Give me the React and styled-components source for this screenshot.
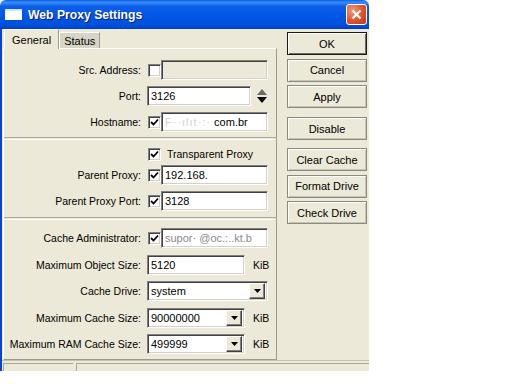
import React from 'react';
import styled, { createGlobalStyle } from 'styled-components';

const GlobalStyle = createGlobalStyle`
  html, body {
    margin: 0;
    padding: 0;
    background: #fff;
  }
  body {
    font-family: 'Liberation Sans', Arial, sans-serif;
    font-size: 11px;
    color: #000;
  }
`;

const Window = styled.div`
  width: 369px;
  height: 371px;
  background: #ece9d8;
  display: flex;
  flex-direction: column;
  overflow: hidden;
`;

const TitleBar = styled.div`
  height: 29px;
  flex: none;
  display: flex;
  align-items: center;
  padding: 0 2px 0 5px;
  background: linear-gradient(
    to bottom,
    #0a5ee8 0%,
    #3b8cf6 8%,
    #0b5fe9 22%,
    #0055e5 60%,
    #0050dc 85%,
    #0040c4 100%
  );
  border-radius: 6px 6px 0 0;
`;

const TitleIcon = styled.div`
  width: 17px;
  height: 11px;
  background: #fff;
  border-top: 2px solid #d8e4fa;
  box-sizing: border-box;
  margin-right: 6px;
`;

const TitleText = styled.div`
  flex: 1;
  color: #fff;
  font-weight: bold;
  font-size: 12.2px;
  text-shadow: 1px 1px #0a1e80;
`;

const CloseButton = styled.div`
  width: 21px;
  height: 21px;
  box-sizing: border-box;
  border: 1px solid #fff;
  border-radius: 3px;
  background: radial-gradient(circle at 30% 30%, #f09a7c, #e0512c 55%, #c43714);
  display: flex;
  align-items: center;
  justify-content: center;
`;

const Frame = styled.div`
  flex: 1;
  display: flex;
  flex-direction: column;
  border-left: 2px solid #0a45d2;
  min-height: 0;
`;

const Body = styled.div`
  flex: 1;
  display: flex;
  padding-left: 1px;
  min-height: 0;
`;

const LeftCol = styled.div`
  width: 274px;
  display: flex;
  flex-direction: column;
`;

const Tabs = styled.div`
  height: 19px;
  display: flex;
  align-items: flex-end;
  padding-left: 1px;
`;

const Tab = styled.div`
  box-sizing: border-box;
  height: ${(p) => (p.$active ? '20px' : '16px')};
  margin-bottom: ${(p) => (p.$active ? '-1px' : '0')};
  padding: 0 ${(p) => (p.$active ? '7px' : '4px')};
  display: flex;
  align-items: center;
  background: ${(p) => (p.$active ? '#ece9d8' : '#d9d5c6')};
  border-top: 1px solid #fff;
  border-left: 1px solid #fff;
  border-right: 1px solid #9d9a8c;
  font-size: 11px;
  position: relative;
  z-index: ${(p) => (p.$active ? 1 : 0)};
`;

const Panel = styled.div`
  flex: 1;
  box-sizing: border-box;
  border-top: 1px solid #fff;
  border-left: 1px solid #fff;
  border-right: 1px solid #9d9a8c;
  border-bottom: 1px solid #9d9a8c;
  display: flex;
  flex-direction: column;
`;

const Section = styled.div`
  display: flex;
  flex-direction: column;
  gap: ${(p) => p.$gap || 6}px;
  padding-top: ${(p) => p.$top || 0}px;
`;

const Separator = styled.div`
  height: 1px;
  border-top: 1px solid #aca899;
  border-bottom: 1px solid #fff;
  margin-top: ${(p) => p.$top}px;
`;

const Row = styled.div`
  display: flex;
  align-items: center;
  height: ${(p) => p.$h || 20}px;
`;

const Label = styled.div`
  width: 137px;
  margin-right: 6px;
  text-align: right;
  font-size: 10.5px;
  white-space: nowrap;
`;

const Check = styled.div`
  width: 13px;
  height: 13px;
  box-sizing: border-box;
  margin-left: 1px;
  background: #fff;
  border-top: 1px solid #808080;
  border-left: 1px solid #808080;
  border-right: 1px solid #fff;
  border-bottom: 1px solid #fff;
  box-shadow: inset 1px 1px #404040, inset -1px -1px #d4d0c8;
  display: flex;
  align-items: center;
  justify-content: center;
  flex: none;
`;

const Field = styled.div`
  width: ${(p) => p.$w}px;
  height: 20px;
  box-sizing: border-box;
  background: ${(p) => (p.$disabled ? '#ece9d8' : '#fff')};
  border-top: 1px solid #808080;
  border-left: 1px solid #808080;
  border-right: 1px solid #fff;
  border-bottom: 1px solid #fff;
  box-shadow: inset 1px 1px #404040, inset -1px -1px #d4d0c8;
  display: flex;
  align-items: center;
  padding: 0 2px 0 3px;
  font-size: 11px;
  white-space: nowrap;
  overflow: hidden;
  flex: none;
`;

const Value = styled.span`
  flex: 1;
  overflow: hidden;
`;

const Blur = styled.span`
  color: ${(p) => p.$c || '#c8c8c8'};
  letter-spacing: ${(p) => p.$ls || 0}px;
`;

const DropButton = styled.div`
  width: 16px;
  height: 16px;
  box-sizing: border-box;
  background: #ece9d8;
  border-top: 1px solid #fff;
  border-left: 1px solid #fff;
  border-right: 1px solid #404040;
  border-bottom: 1px solid #404040;
  box-shadow: inset -1px -1px #808080;
  display: flex;
  align-items: center;
  justify-content: center;
  flex: none;
`;

const Unit = styled.div`
  margin-left: 8px;
  font-size: 10.5px;
`;

const Spinner = styled.div`
  margin-left: 6px;
  display: flex;
  align-items: center;
`;

const TransparentLabel = styled.div`
  margin-left: 6px;
  font-size: 10.5px;
`;

const RightCol = styled.div`
  width: 80px;
  margin-left: 10px;
  padding-top: 3px;
  display: flex;
  flex-direction: column;
`;

const ButtonGroup = styled.div`
  display: flex;
  flex-direction: column;
  gap: 3.5px;
  margin-bottom: ${(p) => p.$after || 0}px;
`;

const Button = styled.div`
  height: 23px;
  box-sizing: border-box;
  display: flex;
  align-items: center;
  justify-content: center;
  background: #ece9d8;
  border: 1px solid ${(p) => (p.$default ? '#1a1a1a' : '#8c8a80')};
  box-shadow: ${(p) =>
    p.$default
      ? 'inset 1px 1px #fff, inset -1px -1px #6e6c64'
      : 'inset 1px 1px #fff, inset -1px -1px #c8c5b8'};
  font-size: 11px;
`;

const StatusBar = styled.div`
  height: 8px;
  flex: none;
  display: flex;
  gap: 3px;
  padding: 2px 0 0 1px;
  border-top: 1px solid #c5c2b2;
`;

const StatusBox = styled.div`
  width: ${(p) => (p.$w ? `${p.$w}px` : 'auto')};
  flex: ${(p) => (p.$w ? 'none' : '1')};
  border-top: 1px solid #aca899;
  border-left: 1px solid #aca899;
`;

const CheckMark = () => (
  <svg width="9" height="9" viewBox="0 0 9 9">
    <path d="M1 4 L3.5 6.5 L8 1.5" stroke="#000" strokeWidth="1.8" fill="none" />
  </svg>
);

const DownArrow = () => (
  <svg width="7" height="4" viewBox="0 0 7 4">
    <path d="M0 0 H7 L3.5 4 Z" fill="#000" />
  </svg>
);

const Checkbox = ({ checked }) => <Check>{checked && <CheckMark />}</Check>;

const Select = ({ w, value }) => (
  <Field $w={w}>
    <Value>{value}</Value>
    <DropButton>
      <DownArrow />
    </DropButton>
  </Field>
);

export default function App() {
  return (
    <>
      <GlobalStyle />
      <Window>
        <TitleBar>
          <TitleIcon />
          <TitleText>Web Proxy Settings</TitleText>
          <CloseButton>
            <svg width="11" height="11" viewBox="0 0 11 11">
              <path d="M1.5 1.5 L9.5 9.5 M9.5 1.5 L1.5 9.5" stroke="#fff" strokeWidth="2.2" />
            </svg>
          </CloseButton>
        </TitleBar>
        <Frame>
          <Body>
            <LeftCol>
              <Tabs>
                <Tab $active>General</Tab>
                <Tab>Status</Tab>
              </Tabs>
              <Panel>
                <Section $top={11}>
                  <Row>
                    <Label>Src. Address:</Label>
                    <Checkbox />
                    <Field $w={107} $disabled />
                  </Row>
                  <Row>
                    <Label>Port:</Label>
                    <Field $w={104}>3126</Field>
                    <Spinner>
                      <svg width="10" height="15" viewBox="0 0 10 15">
                        <path d="M5 0 L10 6 H0 Z" fill="#6b6b6b" />
                        <path d="M0 8 H10 L5 14 Z" fill="#000" />
                      </svg>
                    </Spinner>
                  </Row>
                  <Row>
                    <Label>Hostname:</Label>
                    <Checkbox checked />
                    <Field $w={107}>
                      <Blur $c="#d2d2d2" $ls={1}>F··ılıt·:·</Blur>&nbsp;com.br
                    </Field>
                  </Row>
                </Section>
                <Separator $top={5} />
                <Section $top={8} $gap={5}>
                  <Row $h={12}>
                    <Label />
                    <Checkbox checked />
                    <TransparentLabel>Transparent Proxy</TransparentLabel>
                  </Row>
                  <Section $gap={6}>
                    <Row>
                      <Label>Parent Proxy:</Label>
                      <Checkbox checked />
                      <Field $w={107}>192.168.</Field>
                    </Row>
                    <Row>
                      <Label>Parent Proxy Port:</Label>
                      <Checkbox checked />
                      <Field $w={107}>3128</Field>
                    </Row>
                  </Section>
                </Section>
                <Separator $top={6} />
                <Section $top={8} $gap={6.5}>
                  <Row>
                    <Label>Cache Administrator:</Label>
                    <Checkbox checked />
                    <Field $w={107}>
                      <Blur $c="#8a8a8a">supor· @oc.:..kt.b</Blur>
                    </Field>
                  </Row>
                  <Row>
                    <Label>Maximum Object Size:</Label>
                    <Field $w={98}>5120</Field>
                    <Unit>KiB</Unit>
                  </Row>
                  <Row>
                    <Label>Cache Drive:</Label>
                    <Select w={121} value="system" />
                  </Row>
                  <Row>
                    <Label>Maximum Cache Size:</Label>
                    <Select w={98} value="90000000" />
                    <Unit>KiB</Unit>
                  </Row>
                  <Row>
                    <Label>Maximum RAM Cache Size:</Label>
                    <Select w={98} value="499999" />
                    <Unit>KiB</Unit>
                  </Row>
                </Section>
              </Panel>
            </LeftCol>
            <RightCol>
              <ButtonGroup $after={9}>
                <Button $default>OK</Button>
                <Button>Cancel</Button>
                <Button>Apply</Button>
              </ButtonGroup>
              <ButtonGroup $after={8}>
                <Button>Disable</Button>
              </ButtonGroup>
              <ButtonGroup>
                <Button>Clear Cache</Button>
                <Button>Format Drive</Button>
                <Button>Check Drive</Button>
              </ButtonGroup>
            </RightCol>
          </Body>
          <StatusBar>
            <StatusBox $w={69} />
            <StatusBox />
          </StatusBar>
        </Frame>
      </Window>
    </>
  );
}
